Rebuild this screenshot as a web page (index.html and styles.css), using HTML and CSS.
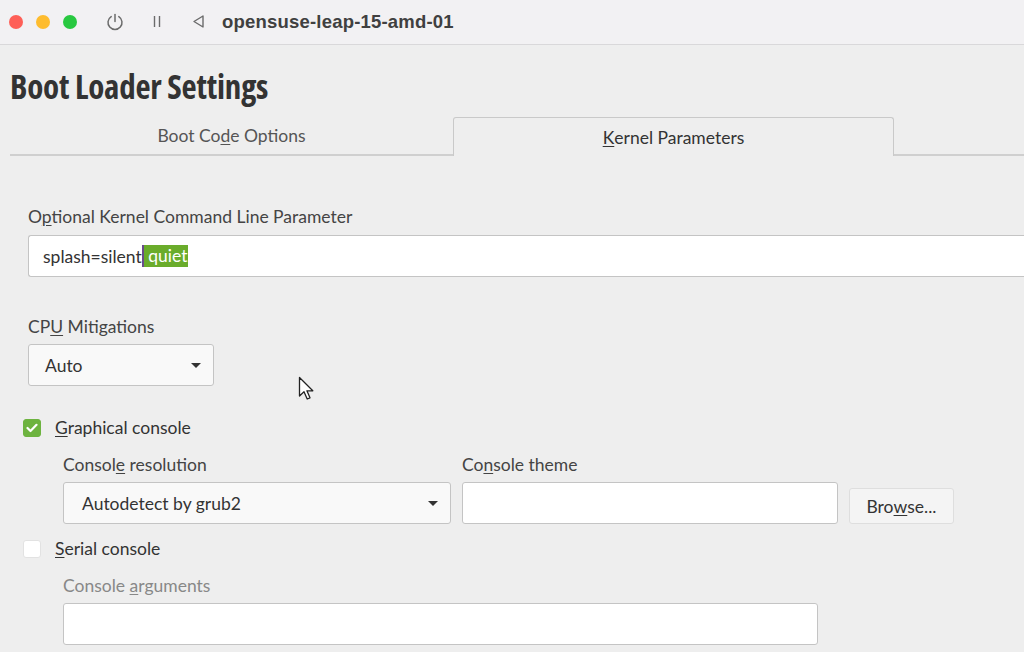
FILE: index.html
```html
<!DOCTYPE html>
<html>
<head>
<meta charset="utf-8">
<link rel="stylesheet" href="styles.css">
</head>
<body>
<div class="titlebar">
  <div class="lights">
    <span class="light red"></span>
    <span class="light yellow"></span>
    <span class="light green"></span>
  </div>
  <div class="tools">
    <svg class="tool" width="20" height="20" viewBox="0 0 20 20"><path d="M6.2 4.6 A7 7 0 1 0 13.8 4.6" fill="none" stroke="#6b6b6b" stroke-width="1.5" stroke-linecap="round"/><line x1="10" y1="2.5" x2="10" y2="9.5" stroke="#6b6b6b" stroke-width="1.5" stroke-linecap="round"/></svg>
    <svg class="tool" width="20" height="20" viewBox="0 0 20 20"><line x1="7.5" y1="4" x2="7.5" y2="15" stroke="#6b6b6b" stroke-width="1.4"/><line x1="12.5" y1="4" x2="12.5" y2="15" stroke="#6b6b6b" stroke-width="1.4"/></svg>
    <svg class="tool" width="20" height="20" viewBox="0 0 20 20"><path d="M14 4 L5 9.5 L14 15 Z" fill="none" stroke="#6b6b6b" stroke-width="1.4" stroke-linejoin="round"/></svg>
  </div>
  <div class="wintitle">opensuse-leap-15-amd-01</div>
</div>
<div class="content">
  <h1 class="heading">Boot Loader Settings</h1>
  <div class="tabs">
    <div class="tab">Boot Co<u>d</u>e Options</div>
    <div class="tab active"><u>K</u>ernel Parameters</div>
    <div class="tab-rest"></div>
  </div>
  <div class="panel">
    <div class="field">
      <div class="label first-label">O<u>p</u>tional Kernel Command Line Parameter</div>
      <div class="input wide"><span>splash=silent</span><span class="caret"></span><span class="sel"> quiet</span></div>
    </div>
    <div class="field cpu">
      <div class="label">CP<u>U</u> Mitigations</div>
      <div class="combo small"><span>Auto</span><span class="arrow"></span></div>
    </div>
    <div class="check-row first">
      <span class="checkbox on"><svg width="12" height="10" viewBox="0 0 12 10"><path d="M1.5 5 L4.5 8 L10.5 1.8" fill="none" stroke="#fff" stroke-width="2.2" stroke-linecap="round" stroke-linejoin="round"/></svg></span>
      <span class="check-label"><u>G</u>raphical console</span>
    </div>
    <div class="sub-row">
      <div class="field res">
        <div class="label">Consol<u>e</u> resolution</div>
        <div class="combo medium"><span>Autodetect by grub2</span><span class="arrow"></span></div>
      </div>
      <div class="field theme">
        <div class="label">Co<u>n</u>sole theme</div>
        <div class="theme-row">
          <div class="input themebox"></div>
          <div class="button">Bro<u>w</u>se...</div>
        </div>
      </div>
    </div>
    <div class="check-row second">
      <span class="checkbox"></span>
      <span class="check-label"><u>S</u>erial console</span>
    </div>
    <div class="sub-row">
      <div class="field args">
        <div class="label disabled">Console <u>a</u>rguments</div>
        <div class="input argbox"></div>
      </div>
    </div>
  </div>
</div>
<svg class="cursor" width="20" height="28" viewBox="0 0 20 28"><path d="M1.5 1.5 L1.5 20 L6 15.8 L9.2 23 L12 21.8 L8.9 14.8 L14.8 14.8 Z" fill="#fff" stroke="#222" stroke-width="1.3" stroke-linejoin="round"/></svg>
</body>
</html>
```
FILE: styles.css
```css
html, body {
  margin: 0;
  padding: 0;
  width: 1024px;
  height: 652px;
  overflow: hidden;
  background: #eeeeee;
  font-family: "Source Sans Pro", "Lato", "Noto Sans", sans-serif;
  color: #333;
}
u { text-decoration-thickness: 1px; text-underline-offset: 2px; }
.titlebar {
  height: 44px;
  background: #f2f1f3;
  border-bottom: 1px solid #d9d8da;
  display: flex;
  align-items: center;
}
.lights { display: flex; gap: 13px; padding-left: 9px; }
.light { width: 14px; height: 14px; border-radius: 50%; display: block; }
.red { background: #fe5f57; }
.yellow { background: #febc2e; }
.green { background: #28c840; }
.tools { display: flex; gap: 22px; margin-left: 28px; }
.tool { display: block; }
.wintitle {
  margin-left: 13px;
  font-family: "Liberation Sans", Arial, sans-serif;
  font-weight: bold;
  font-size: 18.5px;
  color: #404040;
  letter-spacing: 0.2px;
}
.content { padding: 0 0 0 10px; }
.heading {
  margin: 0;
  padding-top: 22px;
  height: 48px;
  font-family: "Open Sans", sans-serif;
  font-stretch: 75%;
  font-weight: 700;
  font-size: 33px;
  line-height: 40px;
  color: #333;
  letter-spacing: -0.2px;
}
.tabs {
  display: flex;
  height: 39px;
  margin-top: 2px;
}
.tab {
  width: 443px;
  border-bottom: 2px solid #cfcfcf;
  font-size: 17.5px;
  color: #555;
  display: flex;
  align-items: center;
  justify-content: center;
  box-sizing: border-box;
}
.tab.active {
  width: 441px;
  border: 1px solid #c9c9c9;
  border-bottom: none;
  border-radius: 3px 3px 0 0;
  color: #333;
}
.tab-rest { flex: 1; border-bottom: 2px solid #cfcfcf; }
.panel { padding-left: 18px; padding-top: 51px; }
.field { display: flex; flex-direction: column; }
.label { font-size: 17.5px; line-height: 20px; color: #444; margin-bottom: 7px; }
.label.first-label { margin-bottom: 8px; }
.label.disabled { color: #888; }
.input {
  background: #fff;
  border: 1px solid #c4c4c4;
  border-radius: 3px;
  box-sizing: border-box;
  height: 42px;
}
.input.wide {
  width: 1010px;
  border-right: none;
  border-radius: 3px 0 0 3px;
  display: flex;
  align-items: center;
  padding-left: 14px;
  font-size: 17.5px;
  color: #333;
}
.caret { width: 2px; height: 22px; background: #6a4c8c; }
.sel { background: #6aac2b; color: #fff; height: 22px; line-height: 22px; padding-right: 1px; white-space: pre; }
.cpu { margin-top: 40px; }
.combo {
  background: #f9f9f9;
  border: 1px solid #c4c4c4;
  border-radius: 3px;
  box-sizing: border-box;
  height: 42px;
  display: flex;
  align-items: center;
  justify-content: space-between;
  padding: 0 12px 0 16px;
  font-size: 17.5px;
  color: #333;
}
.combo.small { width: 186px; }
.combo.medium { width: 388px; padding-left: 18px; }
.arrow {
  width: 0; height: 0;
  border-left: 5px solid transparent;
  border-right: 5px solid transparent;
  border-top: 5px solid #333;
}
.check-row { display: flex; align-items: center; margin-left: -5px; }
.check-row.first { margin-top: 32px; }
.check-row.second { margin-top: 15px; }
.checkbox {
  width: 18px; height: 18px;
  border-radius: 3px;
  box-sizing: border-box;
  background: #fff;
  border: 1px solid #e2e2e2;
  display: flex;
  align-items: center;
  justify-content: center;
}
.checkbox.on { background: #6db33f; border-color: #6db33f; }
.check-label { margin-left: 14px; font-size: 17.5px; color: #333; line-height: 20px; }
.sub-row { display: flex; padding-left: 35px; margin-top: 17px; gap: 11px; }
.theme-row { display: flex; align-items: flex-end; gap: 11px; }
.themebox { width: 376px; }
.button {
  width: 105px; height: 36px;
  box-sizing: border-box;
  border: 1px solid #dedede;
  border-radius: 3px;
  background: #f4f4f4;
  display: flex; align-items: center; justify-content: center;
  font-size: 17.5px; color: #333;
}
.argbox { width: 755px; }
.cursor { position: absolute; left: 298px; top: 376px; }
```
